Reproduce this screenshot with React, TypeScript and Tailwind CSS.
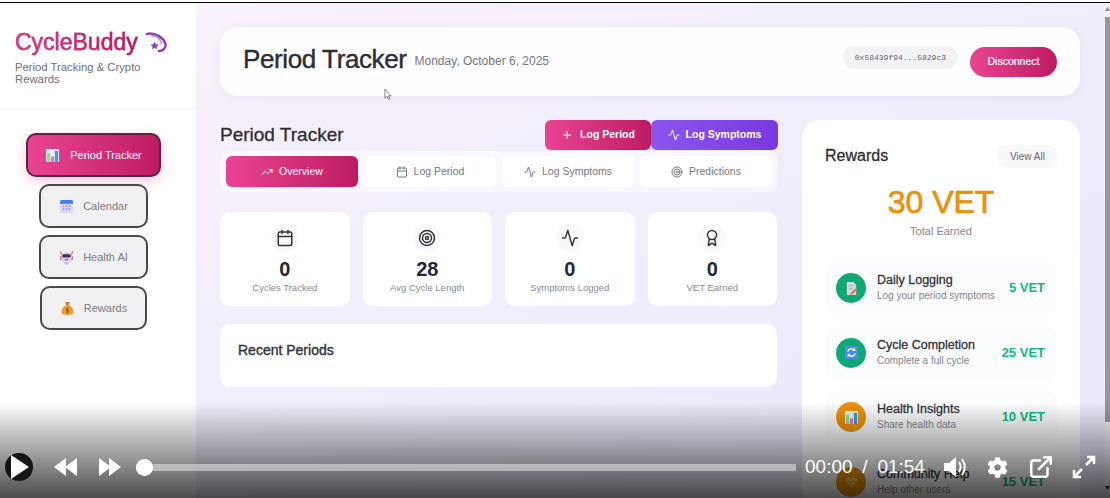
import { Activity, Award, Calendar, ExternalLink, Plus, Target, TrendingUp } from "lucide-react";
import { FaCog } from "react-icons/fa";
import type { ReactNode } from "react";

function BarsEmoji() {
  return (
    <svg viewBox="0 0 16 16" className="h-full w-full">
      <rect x="1" y="1" width="14" height="14" rx="1" fill="#eef0f4" />
      <rect x="2" y="5" width="3.500" height="10" fill="#8fdc9b" />
      <rect x="6.500" y="9" width="3" height="6" fill="#ef6fae" />
      <rect x="10.500" y="3" width="3.500" height="12" fill="#3b9be8" />
    </svg>
  );
}

function CalendarEmoji() {
  return (
    <svg viewBox="0 0 16 16" className="h-full w-full">
      <rect x="1" y="1" width="14" height="14" rx="2" fill="#d9d6f5" />
      <path d="M1 5V3a2 2 0 0 1 2-2h10a2 2 0 0 1 2 2v2z" fill="#3f7fe8" />
      <g fill="#8d87c9">
        <rect x="4" y="7" width="1.600" height="1.400" />
        <rect x="7.200" y="7" width="1.600" height="1.400" />
        <rect x="10.400" y="7" width="1.600" height="1.400" />
        <rect x="4" y="10" width="1.600" height="1.400" />
        <rect x="7.200" y="10" width="1.600" height="1.400" />
        <rect x="10.400" y="10" width="1.600" height="1.400" />
      </g>
    </svg>
  );
}

function RobotEmoji() {
  return (
    <svg viewBox="0 0 16 16" className="h-full w-full">
      <path d="M1.500 1.500 3 6M14.500 1.500 13 6" stroke="#e0567c" strokeWidth="1.200" />
      <rect x="1" y="6" width="14" height="5" rx="1.500" fill="#e0708f" />
      <rect x="2.500" y="2.500" width="11" height="10" rx="4" fill="#d8cfe8" />
      <rect x="3.500" y="4.500" width="9" height="3.500" rx="1.700" fill="#33365c" />
      <rect x="6" y="9.500" width="4" height="1.400" rx="0.700" fill="#6a6a90" />
      <path d="M5 13h6l-1 2.500H6z" fill="#c6bedd" />
    </svg>
  );
}

function BagEmoji() {
  return (
    <svg viewBox="0 0 16 16" className="h-full w-full">
      <path d="M5.500 1h5L9.500 4.500h-3z" fill="#c9802c" />
      <path d="M6 4.500h4c3 2 4.500 4.500 4.500 7 0 2.500-2 3.500-6.500 3.500S1.500 14 1.500 11.500c0-2.500 1.500-5 4.500-7z" fill="#ee9a33" />
      <path d="M9.500 8.300C9 7.700 6.700 7.600 6.700 9c0 1.400 2.700.8 2.700 2.200 0 1.300-2.400 1.200-3 .5M8 7v6" stroke="#7a3f10" strokeWidth="0.800" fill="none" />
    </svg>
  );
}

function MemoEmoji() {
  return (
    <svg viewBox="0 0 16 16" className="h-full w-full">
      <path d="M3 1h7l3 3v11H3z" fill="#d7d3e0" />
      <path d="M5 5h5M5 8h4" stroke="#a8a3b8" strokeWidth="0.800" />
      <path d="M7 13l5-5 2 1.500-5 5-2.300.3z" fill="#ee7444" />
    </svg>
  );
}

function RefreshEmoji() {
  return (
    <svg viewBox="0 0 16 16" className="h-full w-full">
      <rect x="1" y="1" width="14" height="14" rx="2" fill="#4a8fe7" />
      <path d="M4 7a4 4 0 0 1 7-1.500M12 9a4 4 0 0 1-7 1.500" stroke="#fff" strokeWidth="1.400" fill="none" />
      <path d="M12 3v3.500H8.800zM4 13V9.500h3.200z" fill="#fff" />
    </svg>
  );
}

function HandshakeEmoji() {
  return (
    <svg viewBox="0 0 16 16" className="h-full w-full">
      <path d="M1 6l4-3 3 1.500L11 3l4 3-7 8z" fill="#f5bd4f" />
      <path d="M4 7l4 2 3-2" stroke="#d28a1d" strokeWidth="0.900" fill="none" />
    </svg>
  );
}

const tabs = [
  { label: "Log Period", icon: <Calendar size={12} /> },
  { label: "Log Symptoms", icon: <Activity size={12} /> },
  { label: "Predictions", icon: <Target size={12} /> },
];

const stats = [
  { value: "0", label: "Cycles Tracked", icon: <Calendar size={18} /> },
  { value: "28", label: "Avg Cycle Length", icon: <Target size={18} /> },
  { value: "0", label: "Symptoms Logged", icon: <Activity size={18} /> },
  { value: "0", label: "VET Earned", icon: <Award size={18} /> },
];

const rewards: { title: string; sub: string; amount: string; bg: string; icon: ReactNode }[] = [
  { title: "Daily Logging", sub: "Log your period symptoms", amount: "5 VET", bg: "bg-[#10a878]", icon: <MemoEmoji /> },
  { title: "Cycle Completion", sub: "Complete a full cycle", amount: "25 VET", bg: "bg-[#10a878]", icon: <RefreshEmoji /> },
  { title: "Health Insights", sub: "Share health data", amount: "10 VET", bg: "bg-[#ea920c]", icon: <BarsEmoji /> },
  { title: "Community Help", sub: "Help other users", amount: "15 VET", bg: "bg-[#ea920c]", icon: <HandshakeEmoji /> },
];

function NavButton({ label, icon, width }: { label: string; icon: ReactNode; width: string }) {
  return (
    <button className={`flex h-[44px] items-center justify-center gap-[9px] rounded-[10px] border-2 border-[#48484e] bg-[#f1f1f4] text-[11px] text-[#7b7b83] ${width}`}>
      <span className="h-[15px] w-[15px]">{icon}</span>
      {label}
    </button>
  );
}

export default function App() {
  return (
    <div className="relative h-[498px] w-[1110px] overflow-hidden bg-white font-['Liberation_Sans',Arial,sans-serif] text-[#2d2d33]">
      <div className="mt-[2px] flex h-[496px] border-t border-black">
        {/* sidebar */}
        <aside className="w-[196px] shrink-0 bg-white">
          <div className="h-[106px] border-b border-[#f4f2f8] px-[15px] pt-[23px]">
            <div className="flex items-center gap-[7px]">
              <h1 className="bg-gradient-to-r from-[#dc3a8c] to-[#b5185e] bg-clip-text text-[23px] leading-[32px] text-transparent [-webkit-text-stroke:0.4px_#c72a78]">
                CycleBuddy
              </h1>
              <svg viewBox="0 0 24 24" className="h-[23px] w-[23px]" fill="none">
                <path d="M2 3c8-2 18 4 19.500 11 .6 4-3 7-7 7" stroke="#8d3fb5" strokeWidth="2.600" strokeLinecap="round" />
                <path d="M7 5c5 0 9 3 10 8" stroke="#b98ad6" strokeWidth="1.500" strokeLinecap="round" />
                <path d="M10 11l1.300 2.700 3 .4-2.200 2 .6 3-2.700-1.500-2.700 1.500.6-3-2.200-2 3-.4z" fill="#8d3fb5" />
              </svg>
            </div>
            <p className="mt-[3px] w-[150px] text-[11.300px] leading-[12px] text-[#6f6f78]">
              Period Tracking &amp; Crypto Rewards
            </p>
          </div>
          <nav className="flex flex-col items-center gap-[7px] pt-[24px] pr-[9px]">
            <button className="flex h-[44px] w-[135px] items-center justify-center gap-[10px] rounded-[10px] border-2 border-[#5c2440] bg-gradient-to-r from-[#ea4394] to-[#bd1a62] text-[11px] text-white shadow-[0_4px_12px_rgba(236,72,153,0.3)]">
              <span className="h-[15px] w-[15px]"><BarsEmoji /></span>
              Period Tracker
            </button>
            <NavButton label="Calendar" icon={<CalendarEmoji />} width="w-[109px]" />
            <NavButton label="Health AI" icon={<RobotEmoji />} width="w-[109px]" />
            <NavButton label="Rewards" icon={<BagEmoji />} width="w-[107px]" />
          </nav>
        </aside>

        {/* main */}
        <main className="flex-1 overflow-hidden bg-gradient-to-br from-[#f9f1fb] to-[#e8e9fb] pt-[24px] pr-[25px] pl-[24px]">
          <header className="flex h-[69px] items-center justify-between rounded-[18px] bg-white/90 px-[23px] shadow-[0_2px_10px_rgba(120,100,180,0.08)]">
            <div className="mb-[5px] flex items-center gap-[8px]">
              <h2 className="text-[26px] leading-[32px] tracking-[-0.4px] text-[#2d2d33] [-webkit-text-stroke:0.4px_#2d2d33]">Period Tracker</h2>
              <span className="mt-[3px] text-[12px] text-[#77777f]">Monday, October 6, 2025</span>
            </div>
            <div className="flex items-center gap-[12px]">
              <span className="mb-[8px] flex h-[23px] items-center rounded-full bg-[#f3f3f5] px-[12px] font-['Liberation_Mono',monospace] text-[8px] text-[#66666e]">
                0x58439f94...5829c3
              </span>
              <button className="h-[30px] w-[87px] rounded-full bg-gradient-to-r from-[#ea4394] to-[#bd1a62] text-[10.500px] text-white [-webkit-text-stroke:0.2px_#fff]">
                Disconnect
              </button>
            </div>
          </header>

          <div className="mt-[24px] flex gap-[24px]">
            <section className="w-[558px] shrink-0">
              <div className="flex h-[30px] items-center justify-between">
                <h3 className="text-[19px] [-webkit-text-stroke:0.3px_#2d2d33]">Period Tracker</h3>
                <div className="flex">
                  <button className="flex h-[30px] w-[106px] items-center justify-center gap-[7px] rounded-[6px] bg-gradient-to-r from-[#ea4394] to-[#bd1a62] text-[10.500px] font-bold text-white">
                    <Plus size={12} /> Log Period
                  </button>
                  <button className="flex h-[30px] w-[127px] items-center justify-center gap-[6px] rounded-[6px] bg-gradient-to-r from-[#8b55ee] to-[#7a38e0] text-[10.500px] font-bold text-white">
                    <Activity size={12} /> Log Symptoms
                  </button>
                </div>
              </div>
              <div className="mt-[1px] flex h-[41px] items-center gap-[6px] rounded-[10px] bg-white/50 px-[6px]">
                <button className="flex h-[31px] w-[132px] items-center justify-center gap-[6px] rounded-[6px] bg-gradient-to-r from-[#ea4394] to-[#bd1a62] text-[10.500px] text-white">
                  <TrendingUp size={12} /> Overview
                </button>
                {tabs.map((t) => (
                  <button key={t.label} className="flex h-[31px] w-[132px] items-center justify-center gap-[6px] rounded-[6px] bg-white text-[10.500px] text-[#77777f]">
                    {t.icon} {t.label}
                  </button>
                ))}
              </div>

              <div className="mt-[20px] grid grid-cols-4 gap-[13px] pr-[1px]">
                {stats.map((s) => (
                  <div key={s.label} className="flex h-[94px] flex-col items-center rounded-[10px] bg-white pt-[12px]">
                    <span className="flex h-[28px] w-[28px] items-center justify-center rounded-full bg-[#f8f8fa] text-[#33333a]">
                      {s.icon}
                    </span>
                    <span className="mt-[5px] text-[20px] leading-[24px] font-bold text-[#1f2937]">{s.value}</span>
                    <span className="text-[9.500px] leading-[14px] text-[#8a8a92]">{s.label}</span>
                  </div>
                ))}
              </div>

              <div className="mt-[18px] mr-[1px] h-[63px] rounded-[10px] bg-white px-[18px] pt-[17px]">
                <h4 className="text-[14px] leading-[18px] text-[#33333a] [-webkit-text-stroke:0.4px_#33333a]">Recent Periods</h4>
              </div>
            </section>

            <section className="h-[400px] w-[278px] shrink-0 rounded-t-[18px] bg-white px-[23px] pt-[24px]">
              <div className="flex items-center justify-between">
                <h3 className="text-[16px] [-webkit-text-stroke:0.3px_#2d2d33]">Rewards</h3>
                <button className="h-[23px] w-[59px] rounded-[8px] bg-[#f8f8fa] text-[10px] text-[#66666e]">View All</button>
              </div>
              <div className="mt-[14px] text-center text-[32px] leading-[40px] text-[#e8910c] [-webkit-text-stroke:0.7px_#e8910c]">30 VET</div>
              <div className="mt-[1px] text-center text-[11px] leading-[16px] text-[#85858d]">Total Earned</div>
              <div className="mt-[23px] flex flex-col gap-[12.500px]">
                {rewards.map((r) => (
                  <div key={r.title} className="flex h-[52px] items-center rounded-[10px] bg-[#fbfcfd] pr-[12px] pl-[11px]">
                    <span className={`flex h-[30px] w-[30px] shrink-0 items-center justify-center rounded-full ${r.bg}`}>
                      <span className="h-[15px] w-[15px]">{r.icon}</span>
                    </span>
                    <div className="ml-[11px] flex-1">
                      <div className="mb-[1px] text-[12.500px] leading-[15px] text-[#33333a] [-webkit-text-stroke:0.3px_#33333a]">{r.title}</div>
                      <div className="text-[10px] leading-[14px] text-[#85858d]">{r.sub}</div>
                    </div>
                    <span className="text-[13px] font-bold text-[#10b981]">{r.amount}</span>
                  </div>
                ))}
              </div>
            </section>
          </div>
        </main>

        {/* page scrollbar */}
        <div className="flex w-[5px] shrink-0 flex-col bg-[#f1f1f1]">
          <svg viewBox="0 0 5 4" className="mt-[4px] h-[4px] w-[5px]"><path d="M2.500 0 5 4H0z" fill="#8a8a8e" /></svg>
          <div className="mt-[6px] h-[405px] bg-[#97979b]" />
          <svg viewBox="0 0 5 4" className="mt-auto mb-[8px] h-[4px] w-[5px]"><path d="M0 0h5L2.500 4z" fill="#303033" /></svg>
        </div>
      </div>

      {/* mouse pointer captured in the recording */}
      <svg viewBox="0 0 10 14" className="absolute top-[88px] left-[384px] h-[13px] w-[9px]">
        <path d="M1 1v10l2.500-2 1.500 3.500 1.500-.7L5 8.500h3z" fill="#fff" stroke="#55555c" strokeWidth="0.800" />
      </svg>

      {/* video player overlay */}
      <div className="absolute inset-x-0 bottom-0 h-[96px] bg-gradient-to-b from-black/0 to-black/70">
        <div className="absolute inset-x-0 bottom-[16px] flex h-[30px] items-center pl-[5px] text-white">
          <span className="flex h-[28px] w-[28px] items-center justify-center rounded-full bg-[#151515]">
            <svg viewBox="0 0 24 28" className="h-[28px] w-[24px]"><path d="M4 2l18 12L4 26z" fill="#fff" /></svg>
          </span>
          <svg viewBox="0 0 24 20" className="ml-[21px] h-[20px] w-[24px]" fill="#fff"><path d="M12 1v18L0 10zM23 1v18L11 10z" /></svg>
          <svg viewBox="0 0 24 20" className="ml-[20px] h-[20px] w-[24px]" fill="#fff"><path d="M1 1v18l12-9zM11 1v18l12-9z" /></svg>
          <div className="relative ml-[14px] h-[7px] w-[660px] bg-white/45">
            <span className="absolute top-[-5px] left-0 h-[17px] w-[17px] rounded-full bg-white" />
          </div>
          <span className="ml-[9px] text-[19px] whitespace-nowrap [word-spacing:4.500px]">00:00 / 01:54</span>
          <svg viewBox="0 0 24 22" className="ml-[18px] h-[22px] w-[24px] shrink-0" fill="none">
            <path d="M1 7h5l7-6v20l-7-6H1z" fill="#fff" />
            <path d="M16 6c2 3 2 7 0 10M19 3c3.500 5 3.500 11 0 16" stroke="#fff" strokeWidth="2" />
          </svg>
          <FaCog className="ml-[20px] h-[21px] w-[21px] shrink-0" />
          <ExternalLink className="ml-[20px] h-[26px] w-[26px] shrink-0" strokeWidth={2.300} />
          <svg viewBox="0 0 24 24" className="ml-[18px] h-[24px] w-[24px] shrink-0" fill="none" stroke="#fff" strokeWidth="2.500">
            <path d="M14 10l8-8M15 2h7v7M10 14l-8 8M2 15v7h7" />
          </svg>
        </div>
      </div>
    </div>
  );
}
